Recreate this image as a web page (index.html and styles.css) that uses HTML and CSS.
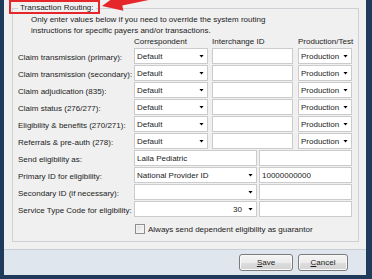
FILE: index.html
```html
<!DOCTYPE html>
<html lang="en">
<head>
  <meta charset="UTF-8" />
  <meta name="viewport" content="width=device-width, initial-scale=1.0" />
  <title>Transaction Routing</title>
  <link rel="stylesheet" href="styles.css">
</head>
<body>

  <div class="window">
    <fieldset class="routing">
      <legend>Transaction Routing:</legend>
      <p class="intro">Only enter values below if you need to override the system routing<br>instructions for specific payers and/or transactions.</p>

      <div class="row head">
        <span class="label"></span>
        <span class="c1">Correspondent</span>
        <span class="c2">Interchange ID</span>
        <span class="c3">Production/Test</span>
      </div>

      <div class="row">
        <span class="label">Claim transmission (primary):</span>
        <div class="combo c1"><span>Default</span><i class="caret"></i></div>
        <div class="field c2"></div>
        <div class="combo c3"><span>Production</span><i class="caret"></i></div>
      </div>
      <div class="row">
        <span class="label">Claim transmission (secondary):</span>
        <div class="combo c1"><span>Default</span><i class="caret"></i></div>
        <div class="field c2"></div>
        <div class="combo c3"><span>Production</span><i class="caret"></i></div>
      </div>
      <div class="row">
        <span class="label">Claim adjudication (835):</span>
        <div class="combo c1"><span>Default</span><i class="caret"></i></div>
        <div class="field c2"></div>
        <div class="combo c3"><span>Production</span><i class="caret"></i></div>
      </div>
      <div class="row">
        <span class="label">Claim status (276/277):</span>
        <div class="combo c1"><span>Default</span><i class="caret"></i></div>
        <div class="field c2"></div>
        <div class="combo c3"><span>Production</span><i class="caret"></i></div>
      </div>
      <div class="row">
        <span class="label">Eligibility &amp; benefits (270/271):</span>
        <div class="combo c1"><span>Default</span><i class="caret"></i></div>
        <div class="field c2"></div>
        <div class="combo c3"><span>Production</span><i class="caret"></i></div>
      </div>
      <div class="row">
        <span class="label">Referrals &amp; pre-auth (278):</span>
        <div class="combo c1"><span>Default</span><i class="caret"></i></div>
        <div class="field c2"></div>
        <div class="combo c3"><span>Production</span><i class="caret"></i></div>
      </div>

      <div class="row">
        <span class="label">Send eligibility as:</span>
        <div class="field w1">Laila Pediatric</div>
        <div class="field w2"></div>
      </div>
      <div class="row">
        <span class="label">Primary ID for eligibility:</span>
        <div class="combo w1"><span>National Provider ID</span><i class="caret"></i></div>
        <div class="field w2">10000000000</div>
      </div>
      <div class="row">
        <span class="label">Secondary ID (if necessary):</span>
        <div class="combo w1"><span></span><i class="caret"></i></div>
        <div class="field w2"></div>
      </div>
      <div class="row">
        <span class="label">Service Type Code for eligibility:</span>
        <div class="combo w1"><span class="num">30</span><i class="caret"></i></div>
        <div class="field w2"></div>
      </div>

      <label class="check-row">
        <span class="checkbox"></span>
        Always send dependent eligibility as guarantor
      </label>
    </fieldset>

    <div class="buttons">
      <button class="save"><u>S</u>ave</button>
      <button class="cancel"><u>C</u>ancel</button>
    </div>
  </div>

  <!-- annotation drawn over the screenshot -->
  <div class="callout"></div>
  <svg class="arrow" width="200" height="20" viewBox="0 0 200 20">
    <polygon points="102,6 123.4,10.8 122.3,5.4 190.7,-8.6 189.3,-15.4 120.9,-1.4 119.8,-6.8" fill="#e5262b" />
  </svg>

</body>
</html>
```

FILE: styles.css
```css
body {
  position: relative;
  margin: 0;
  width: 372px;
  height: 279px;
  overflow: hidden;
  background: #1f3a5a;
  font-family: "Liberation Sans", Arial, sans-serif;
  font-size: 8px;
  color: #1b1b1b;
}
.window {
  display: flex;
  flex-direction: column;
  margin-left: 4px;
  width: 362px;
  height: 275px;
  background: #f0f0f0;
}
.routing {
  margin: 2px 7px 7px 8px;
  padding: 0 6px 6px 5px;
  border: 1px solid #cdd1d5;
  min-width: 0;
}
.routing legend {
  padding: 0 2px;
  line-height: 12px;
}
.intro {
  margin: 0 0 0 13px;
  line-height: 11px;
}
.row {
  display: flex;
  align-items: center;
  height: 16px;
  margin-top: 1px;
}
.row.head {
  height: 11px;
  margin-top: 0;
  line-height: 11px;
}
.label {
  flex: none;
  width: 116px;
  white-space: nowrap;
  position: relative;
  top: 1px;
}
.c1 { width: 74px; margin-right: 4px; flex: none; }
.c2 { width: 81px; margin-right: 5px; flex: none; }
.c3 { width: 54px; flex: none; }
.w1 { width: 123px; margin-right: 2px; flex: none; }
.w2 { width: 93px; flex: none; }
.field, .combo {
  box-sizing: border-box;
  display: flex;
  align-items: center;
  height: 16px;
  padding: 0 3px 0 2px;
  background: #fff;
  border: 1px solid #cbcbcb;
  white-space: nowrap;
}
.combo span {
  flex: 1;
}
.combo .num {
  text-align: right;
  padding-right: 6px;
}
.caret {
  width: 5px;
  height: 3px;
  background: #000;
  clip-path: polygon(0 0, 100% 0, 50% 100%);
}
.check-row {
  display: flex;
  align-items: center;
  gap: 3px;
  height: 12px;
  margin-top: 6px;
  padding-left: 117px;
}
.checkbox {
  box-sizing: border-box;
  width: 10px;
  height: 10px;
  border: 1px solid #8f8f8f;
  background: linear-gradient(135deg, #dcdcdc, #fbfbfb);
  box-shadow: inset 0 0 0 1px #f4f4f4;
}
.buttons {
  flex: 1;
  display: flex;
  justify-content: flex-end;
  align-items: flex-start;
  gap: 5px;
  padding: 4px 18px 0 0;
  background: #dfe6ee;
  border-top: 1px solid #c6cdd4;
}
.buttons button {
  box-sizing: border-box;
  height: 17px;
  padding: 0;
  font: inherit;
  color: #1b1b1b;
  border: 1px solid #7a7a7a;
  border-radius: 3px;
  background: linear-gradient(#f4f4f4 0%, #ececec 50%, #dedede 51%, #d2d2d2 100%);
  box-shadow: inset 0 0 0 1px #fafafa;
}
.save { width: 54px; }
.cancel { width: 50px; }
.callout {
  position: absolute;
  left: 9px;
  top: 0;
  width: 91px;
  height: 14px;
  box-sizing: border-box;
  border: 2px solid #e5262b;
}
.arrow {
  position: absolute;
  left: 0;
  top: 0;
}
```
